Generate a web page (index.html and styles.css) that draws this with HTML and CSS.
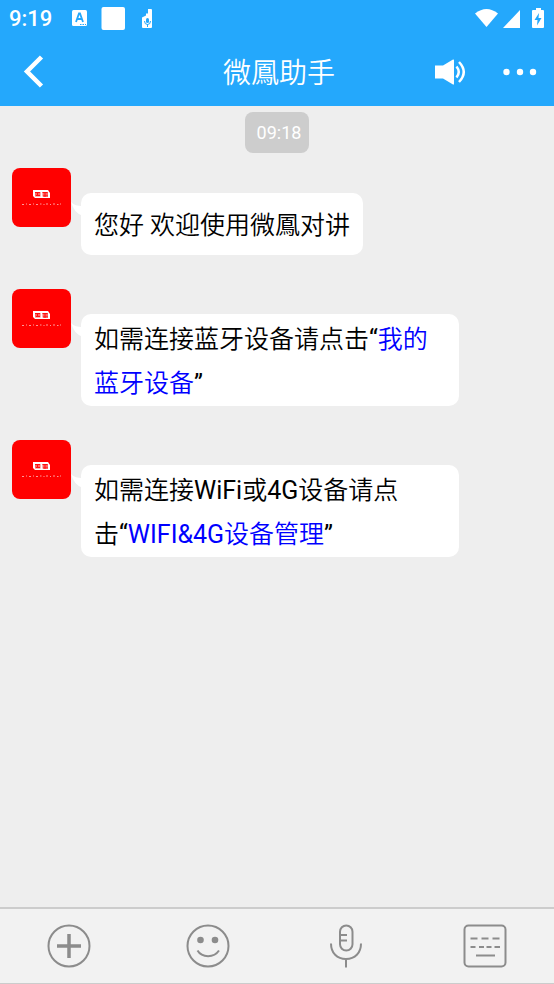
FILE: index.html
```html
<!DOCTYPE html>
<html lang="zh-CN">
<head>
<meta charset="utf-8">
<meta name="viewport" content="width=device-width, initial-scale=1">
<title>微鳳助手</title>
<link rel="stylesheet" href="styles.css">
</head>
<body>
<svg class="defs" aria-hidden="true">
  <symbol id="logo" viewBox="0 0 59 59">
    <path d="M21 22h15l2 3v5H23l-2-2z" fill="#fff"/>
    <path d="M23 24h5.500v4.500H23zM30.500 24H36v4.500h-5.500zM24 29.500h4M31 29.500h5" fill="#f66"/>
    <path d="M23 24.500h5M24 27.500h4M30.500 24.500h5M31 28h5M25.500 24v4M33 25v4" fill="none" stroke="#f11" stroke-width="1"/>
    <path d="M10 36.500h2M14 36h1M17 36.500h2M21 36h1M24 36.500h2M28 36h1.500M31.500 36.500h1M34 36h2M38 36.500h1M41 36h2M45 36.500h1.500M48 36h1" stroke="#fcc" stroke-width="1" opacity=".75"/>
  </symbol>
  <symbol id="tail" viewBox="0 0 12 14">
    <path d="M0 0C3 3 6 4 12 4V14C6 12 2 7 0 0z" fill="#fff"/>
  </symbol>
</svg>
<div class="app">
  <header class="top">
    <div class="status">
      <span class="clock">9:19</span>
      <svg class="status-left" viewBox="0 0 84 26" aria-hidden="true">
        <rect x="2" y="4" width="15" height="16" rx="1.500" fill="#fff"/>
        <path d="M6 16L9 7.500h1L13 16M7 13h5" fill="none" stroke="#24a8fc" stroke-width="1.800"/>
        <path d="M10 18.500h1.500M12.500 18.500h1.500M15 18.500h1" stroke="#24a8fc" stroke-width="1"/>
        <rect x="31.500" y="1" width="23.500" height="23" rx="2" fill="#fff"/>
        <path d="M78 3h3q1 0 1 1v17q0 1-1 1h-8q-1 0-1-1V11.500l4-2V7.500h2z" fill="#fff"/>
        <rect x="76" y="12" width="3" height="5" rx="1.500" fill="#24a8fc"/>
        <path d="M74.500 15q0 3.500 3 3.500t3-3.500M77.500 18v3" fill="none" stroke="#24a8fc" stroke-width="1"/>
      </svg>
      <svg class="status-right" viewBox="0 0 70 26" aria-hidden="true">
        <path d="M0 7.500Q11.500-1.500 23 7.500L11.500 21z" fill="#fff"/>
        <path d="M28 22L45 4V22z" fill="#fff"/>
        <path d="M61 2h5v2h2q1 0 1 1v16q0 1-1 1H58q-1 0-1-1V5q0-1 1-1h3z" fill="#fff"/>
        <path d="M64 7l-4.500 7h3l-.500 5.500 4.500-7.500h-3z" fill="#24a8fc"/>
      </svg>
    </div>
    <div class="bar">
      <button class="icon-btn" aria-label="返回"><svg width="24" height="36" viewBox="0 0 24 36"><path d="M20.500 3L6 17.500 20.500 32" fill="none" stroke="#fff" stroke-width="4.500"/></svg></button>
      <h1 class="title">微鳳助手</h1>
      <div class="actions">
        <button class="icon-btn" aria-label="扬声器"><svg width="32" height="28" viewBox="0 0 32 28"><path d="M0 7.500h8L18 1.500q1-.500 1 1v23q0 1.500-1 1L8 20.500H0z" fill="#fff"/><path d="M21.500 8.500q4.500 5.500 0 11M24 4q9.500 10 0 20" fill="none" stroke="#fff" stroke-width="2.500"/></svg></button>
        <button class="icon-btn" aria-label="更多"><svg width="34" height="8" viewBox="0 0 34 8"><g fill="#fff"><circle cx="3.500" cy="4" r="3.200"/><circle cx="17" cy="4" r="3.200"/><circle cx="30" cy="4" r="3.200"/></g></svg></button>
      </div>
    </div>
  </header>
  <main class="chat">
    <time class="stamp">09:18</time>
    <article class="message">
      <svg class="avatar" role="img" aria-label="微鳳"><use href="#logo"/></svg>
      <div class="bubble"><svg class="tail" aria-hidden="true"><use href="#tail"/></svg><p>您好 欢迎使用微鳳对讲</p></div>
    </article>
    <article class="message">
      <svg class="avatar" role="img" aria-label="微鳳"><use href="#logo"/></svg>
      <div class="bubble"><svg class="tail" aria-hidden="true"><use href="#tail"/></svg><p>如需连接蓝牙设备请点击<span class="latin">“</span><a href="#bluetooth">我的蓝牙设备</a><span class="latin">”</span></p></div>
    </article>
    <article class="message">
      <svg class="avatar" role="img" aria-label="微鳳"><use href="#logo"/></svg>
      <div class="bubble"><svg class="tail" aria-hidden="true"><use href="#tail"/></svg><p>如需连接<span class="latin">WiFi</span>或<span class="latin">4G</span>设备请点<span class="keep">击<span class="latin">“</span><a href="#wifi"><span class="latin">WIFI&amp;4G</span>设备管理</a><span class="latin">”</span></span></p></div>
    </article>
  </main>
  <footer class="tools">
    <button class="tool" aria-label="添加"><svg viewBox="0 0 44 44"><circle cx="22" cy="22" r="20.500"/><path d="M22 10v24M10 22h24" stroke-width="3.500"/></svg></button>
    <button class="tool" aria-label="表情"><svg viewBox="0 0 44 44"><circle cx="22" cy="22" r="20.500"/><g fill="#8c8c8c" stroke="none"><circle cx="14.500" cy="16" r="3.300"/><circle cx="29" cy="16" r="3.300"/></g><path d="M11.500 26.500C16 34 28 34 33 26.500"/></svg></button>
    <button class="tool" aria-label="语音"><svg viewBox="0 0 44 44"><rect x="16" y="1.500" width="12.500" height="25" rx="6.250"/><path d="M17 11h6M17 16.500h6M7 19.500C7 29 13 35 22 35S37 29 37 19.500M22 35v8.500"/></svg></button>
    <button class="tool" aria-label="键盘"><svg viewBox="0 0 44 44"><rect x="1.500" y="1.500" width="41" height="41" rx="4"/><path d="M7.500 14.500h7M18.500 14.500h7M29.500 14.500h7M7.500 23h5M16 23h5M23.500 23h5M31.500 23H37M13 31.500h19"/></svg></button>
  </footer>
</div>
</body>
</html>
```
FILE: styles.css
```css
* { box-sizing: border-box; }
body {
  margin: 0;
  background: #eee;
  color: #000;
  font-family: Roboto, "Noto Sans CJK SC", sans-serif;
}
button { border: 0; padding: 0; background: none; cursor: pointer; }
.defs { position: absolute; width: 0; height: 0; }
.app { display: flex; flex-direction: column; min-height: 100vh; }

.top { background: #24a8fc; color: #fff; }
.status { display: flex; align-items: center; height: 38px; padding: 0 9px; }
.clock { font-size: 22px; font-weight: 500; line-height: 38px; }
.status-left { width: 84px; height: 26px; margin-left: 18px; }
.status-right { width: 70px; height: 26px; margin-left: auto; }
.bar {
  display: grid;
  grid-template-columns: 1fr auto 1fr;
  align-items: center;
  height: 68px;
  padding: 0 17px 0 21px;
}
.icon-btn { display: flex; justify-self: start; }
.title { margin: 0; padding-top: 4px; font-size: 28px; line-height: 64px; font-weight: 350; }
.actions { display: flex; align-items: center; justify-content: flex-end; gap: 36px; }

.chat { flex: 1; display: flex; flex-direction: column; padding: 6px 12px 34px; }
.stamp {
  align-self: center;
  padding: 0 8px 0 12px;
  border-radius: 8px;
  background: #cdcdcd;
  color: #fff;
  font-size: 18px;
  line-height: 41px;
}
.message { display: flex; align-items: flex-start; gap: 10px; margin-top: 34px; }
.stamp + .message { margin-top: 15px; }
.avatar { flex: none; width: 59px; height: 59px; border-radius: 8px; background: #f00; }
.bubble {
  position: relative;
  display: flex;
  align-items: center;
  max-width: 378px;
  min-height: 62px;
  margin-top: 25px;
  padding: 4px 13px 0;
  border-radius: 10px;
  background: #fff;
}
.bubble p { margin: 0; font-size: 25px; line-height: 44px; font-weight: 350; }
.bubble a { color: #00f; text-decoration: none; }
.latin { font-weight: 400; }
.keep { display: inline-block; }
.tail { position: absolute; top: 9px; left: -10px; width: 12px; height: 14px; }

.tools {
  display: grid;
  grid-template-columns: repeat(4, 1fr);
  height: 77px;
  border-top: 2px solid #ccc;
  border-bottom: 1px solid #ccc;
  background: #f2f2f2;
}
.tool { display: flex; align-items: center; justify-content: center; }
.tool svg { width: 44px; height: 44px; fill: none; stroke: #8c8c8c; stroke-width: 2; stroke-linecap: butt; }
```
